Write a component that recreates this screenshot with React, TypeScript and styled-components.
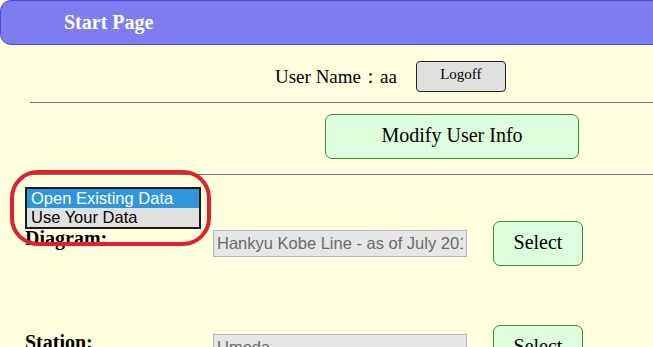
import styled, { createGlobalStyle } from 'styled-components';

const GlobalStyle = createGlobalStyle`
    html, body {
        margin: 0;
        padding: 0;
        background: #ffffe0;
        overflow: hidden;
    }
    body {
        font-family: "Liberation Serif", "Times New Roman", serif;
        color: #000;
    }
`

const Page = styled.div`
    position: relative;
    width: 653px;
    height: 347px;
    overflow: hidden;
`

const Header = styled.div`
    box-sizing: border-box;
    width: 680px;
    height: 45px;
    background: #7d7def;
    border: 1px solid #4b4bd6;
    border-radius: 11px;
    padding: 10px 0 0 63px;
    color: #fff;
    font-size: 20px;
    font-weight: bold;
`

const UserBar = styled.div`
    display: flex;
    align-items: center;
    padding: 16px 0 0 275px;
    font-size: 19px;
`

const Logoff = styled.button`
    margin-left: 19px;
    width: 90px;
    height: 31px;
    background: #e0e0e0;
    border: 1px solid #222;
    border-radius: 4px;
    font-family: "Liberation Serif", serif;
    font-size: 15px;
    color: #000;
    padding: 0 0 4px;
`

const Divider = styled.hr<{ $top: number }>`
    margin: ${({ $top }) => $top}px 0 0 30px;
    border: 0;
    border-top: 1px solid #777;
    height: 0;
`

const ModifyRow = styled.div`
    padding: 11px 0 0 325px;
`

const GreenButton = styled.button<{ $w: number }>`
    box-sizing: border-box;
    width: ${({ $w }) => $w}px;
    height: 45px;
    background: #ddffdd;
    border: 1px solid #3a8a3a;
    border-radius: 7px;
    font-family: "Liberation Serif", serif;
    font-size: 20px;
    color: #000;
    padding: 0 0 2px;
`

const Form = styled.div`
    display: flex;
    flex-direction: column;
    gap: 59px;
    padding: 46px 0 0 25px;
`

const Row = styled.div`
    display: grid;
    grid-template-columns: 188px 280px 90px;
    align-items: center;
    height: 45px;
`

const Label = styled.span`
    align-self: start;
    font-size: 20px;
    font-weight: bold;
    padding-top: 6px;
`

const Field = styled.input`
    box-sizing: border-box;
    width: 254px;
    height: 27px;
    background: #e6e6e6;
    border: 1px solid #b4b4b4;
    font-family: "Liberation Sans", Arial, sans-serif;
    font-size: 16.5px;
    color: #6a6a6a;
    padding: 0 3px;
`

const ListBox = styled.div`
    position: absolute;
    left: 25px;
    top: 187px;
    box-sizing: border-box;
    width: 176px;
    border: 2px solid #1a1a1a;
    background: #e0e0e0;
    font-family: "Liberation Sans", Arial, sans-serif;
    font-size: 16.5px;
    line-height: 19px;
`

const Option = styled.div<{ $selected?: boolean }>`
    padding-left: 4px;
    white-space: nowrap;
    background: ${({ $selected }) => ($selected ? '#2f96dc' : 'transparent')};
    color: ${({ $selected }) => ($selected ? '#fff' : '#000')};
`

const Annotation = styled.div`
    position: absolute;
    left: 10px;
    top: 170px;
    width: 201px;
    height: 76px;
    box-sizing: border-box;
    border: 4px solid #e0202a;
    border-radius: 28px;
`

const App = () => {
    return (
        <Page>
            <GlobalStyle />
            <Header>Start Page</Header>
            <UserBar>
                User Name：aa
                <Logoff>Logoff</Logoff>
            </UserBar>
            <Divider $top={10} />
            <ModifyRow>
                <GreenButton $w={254}>Modify User Info</GreenButton>
            </ModifyRow>
            <Divider $top={15} />
            <Form>
                <Row>
                    <Label>Diagram:</Label>
                    <Field disabled value="Hankyu Kobe Line - as of July 2017" readOnly />
                    <GreenButton $w={90}>Select</GreenButton>
                </Row>
                <Row>
                    <Label>Station:</Label>
                    <Field disabled value="Umeda" readOnly />
                    <GreenButton $w={90}>Select</GreenButton>
                </Row>
            </Form>
            <ListBox>
                <Option $selected>Open Existing Data</Option>
                <Option>Use Your Data</Option>
            </ListBox>
            <Annotation />
        </Page>
    );
};

export default App;
